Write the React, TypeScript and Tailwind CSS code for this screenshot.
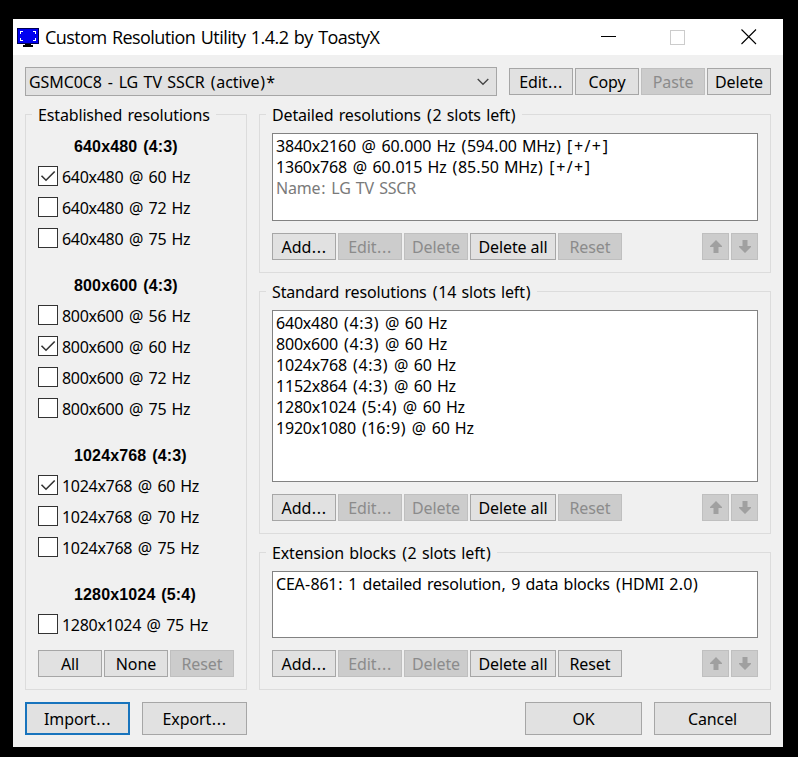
import type { ReactNode } from 'react'
import clsx from 'clsx'

const established = [
  {
    title: '640x480 (4:3)',
    modes: [
      { label: '640x480 @ 60 Hz', checked: true },
      { label: '640x480 @ 72 Hz', checked: false },
      { label: '640x480 @ 75 Hz', checked: false },
    ],
  },
  {
    title: '800x600 (4:3)',
    modes: [
      { label: '800x600 @ 56 Hz', checked: false },
      { label: '800x600 @ 60 Hz', checked: true },
      { label: '800x600 @ 72 Hz', checked: false },
      { label: '800x600 @ 75 Hz', checked: false },
    ],
  },
  {
    title: '1024x768 (4:3)',
    modes: [
      { label: '1024x768 @ 60 Hz', checked: true },
      { label: '1024x768 @ 70 Hz', checked: false },
      { label: '1024x768 @ 75 Hz', checked: false },
    ],
  },
  {
    title: '1280x1024 (5:4)',
    modes: [{ label: '1280x1024 @ 75 Hz', checked: false }],
  },
]

const standard = [
  '640x480 (4:3) @ 60 Hz',
  '800x600 (4:3) @ 60 Hz',
  '1024x768 (4:3) @ 60 Hz',
  '1152x864 (4:3) @ 60 Hz',
  '1280x1024 (5:4) @ 60 Hz',
  '1920x1080 (16:9) @ 60 Hz',
]

// Gives punctuation a little more room than the font does
function Label({ text }: { text: string }) {
  return (
    <>
      {text.split(/([():+[\].,@*-])/).map((part, i) => {
        if (i % 2 === 0) return part
        const wide = '():'.includes(part)
        return (
          <span
            key={i}
            className={part === '+' ? 'px-[1.5px]' : wide ? 'px-[0.8px]' : 'px-[0.45px]'}
          >
            {part}
          </span>
        )
      })}
    </>
  )
}

type ButtonProps = {
  text?: string
  children?: ReactNode
  className?: string
  disabled?: boolean
  focused?: boolean
}

function Button({ text, children, className = 'w-16 h-[27px]', disabled, focused }: ButtonProps) {
  return (
    <button
      disabled={disabled}
      className={clsx(
        'flex shrink-0 items-center justify-center tracking-[-0.1px] whitespace-nowrap',
        className,
        focused ? 'border-2 border-[#1874bd]' : 'border',
        disabled
          ? 'border-[#bfbfbf] bg-[#cccccc] text-[#8b8b8b]'
          : 'bg-[#e1e1e1] text-black',
        !disabled && !focused && 'border-[#a6a6a6]'
      )}
    >
      {text ? <span><Label text={text} /></span> : children}
    </button>
  )
}

function Group({ title, className, children }: { title: string; className: string; children: ReactNode }) {
  return (
    <section className={clsx('flex flex-col border border-[#dcdcdc] px-3', className)}>
      <h2 className="-ml-1.5 -mt-[10px] h-5 w-fit shrink-0 bg-[#f0f0f0] px-1.5 leading-[21px] tracking-[-0.15px] whitespace-nowrap">
        <Label text={title} />
      </h2>
      {children}
    </section>
  )
}

function Arrow({ down }: { down?: boolean }) {
  return (
    <svg width="12" height="13" viewBox="0 0 12 13" className={down ? 'rotate-180' : ''}>
      <path d="M6 0L12 6V7H8.5V13H3.5V7H0V6Z" fill="#a0a0a0" />
    </svg>
  )
}

function ListActions({ canReset }: { canReset?: boolean }) {
  return (
    <div className="mt-3 flex gap-0.5">
      <Button text="Add..." />
      <Button disabled text="Edit..." />
      <Button disabled text="Delete" />
      <Button className="h-[27px] w-[86px]" text="Delete all" />
      <Button disabled={!canReset} text="Reset" />
      <div className="ml-auto flex gap-0.5">
        <Button disabled className="h-[27px] w-[27px]">
          <Arrow />
        </Button>
        <Button disabled className="h-[27px] w-[27px]">
          <Arrow down />
        </Button>
      </div>
    </div>
  )
}

function List({ className, children }: { className: string; children: ReactNode }) {
  return (
    <ul className={clsx('border border-[#828282] bg-white px-[3px] pt-0.5 leading-[21px] tracking-[-0.2px] whitespace-nowrap', className)}>
      {children}
    </ul>
  )
}

function Checkbox({ label, checked }: { label: string; checked: boolean }) {
  return (
    <label className="flex h-[31px] items-start gap-1 pt-[5px]">
      <span className="flex h-5 w-5 shrink-0 items-center justify-center border border-[#333] bg-white">
        {checked && (
          <svg width="18" height="18" viewBox="0 0 18 18" fill="none" stroke="#333" strokeWidth="1.6">
            <path d="M2.5 8.7L7 13.2L15.7 4.5" />
          </svg>
        )}
      </span>
      <span className="leading-[22px] whitespace-nowrap">
        <Label text={label} />
      </span>
    </label>
  )
}

function TitleBar() {
  return (
    <header className="flex h-9 items-center bg-white pl-1">
      <svg width="22" height="19" viewBox="0 0 22 19" shapeRendering="crispEdges">
        <rect width="22" height="16" fill="#000050" />
        <rect x="1" y="1" width="20" height="14" fill="#0000f0" />
        <path d="M3.5 6V3.5H6M16 3.5H18.5V6M18.5 10V12.5H16M6 12.5H3.5V10" fill="none" stroke="#fff" />
        <path d="M8 16H14V17H16V19H6V17H8Z" fill="#000" />
      </svg>
      <h1 className="ml-1.5 font-['Open_Sans','Noto_Sans',sans-serif] text-[18px] leading-9 tracking-[-0.56px] whitespace-nowrap">
        Custom Resolution Utility 1.4.2 by ToastyX
      </h1>
      <svg className="mr-[26px] ml-auto" width="156" height="16" viewBox="0 0 156 16" fill="none">
        <path d="M0 7.5H15" stroke="#000" />
        <rect x="69.5" y="1.5" width="14" height="14" stroke="#ccc" />
        <path d="M140.5 0.5L155 15M155 0.5L140.5 15" stroke="#000" strokeWidth="1.1" />
      </svg>
    </header>
  )
}

export default function App() {
  return (
    <div className="h-[757px] w-[798px] bg-black pt-[19px] pl-[13px] font-['Noto_Sans',sans-serif] text-[16px] tracking-[-0.3px] text-black [word-spacing:1.3px]">
      <div className="h-[728px] w-[770px] bg-[#f0f0f0]">
        <TitleBar />
        <main className="px-3 pt-3">
          {/* Display selector */}
          <div className="flex h-[29px] items-center gap-0.5">
            <div className="mr-2.5 flex h-[29px] w-[472px] items-center justify-between border border-[#a6a6a6] bg-[#e1e1e1] pr-[7px] pl-[3px]">
              <span className="tracking-[-0.08px]">
                <Label text="GSMC0C8 - LG TV SSCR (active)*" />
              </span>
              <svg width="12" height="8" viewBox="0 0 12 8" fill="none" stroke="#444" strokeWidth="1.3">
                <path d="M0.7 1L6 6.3L11.3 1" />
              </svg>
            </div>
            <Button text="Edit..." />
            <Button text="Copy" />
            <Button disabled text="Paste" />
            <Button text="Delete" />
          </div>

          <div className="mt-[18px] flex gap-3">
            <Group title="Established resolutions" className="h-[576px] w-[222px]">
              <div className="mt-[5px] flex flex-col gap-[15px]">
                {established.map((group) => (
                  <div key={group.title}>
                    <h3 className="h-[31px] pl-9 font-['Liberation_Sans',Arial,sans-serif] font-bold leading-[34px] tracking-[0.15px]">
                      {group.title}
                    </h3>
                    {group.modes.map((mode) => (
                      <Checkbox key={mode.label} {...mode} />
                    ))}
                  </div>
                ))}
              </div>
              <div className="mt-2.5 flex gap-0.5">
                <Button text="All" />
                <Button text="None" />
                <Button disabled text="Reset" />
              </div>
            </Group>

            <div className="flex w-[512px] flex-col">
              <Group title="Detailed resolutions (2 slots left)" className="h-[159px]">
                <List className="mt-2 h-[88px]">
                  <li><Label text="3840x2160 @ 60.000 Hz (594.00 MHz) [+/+]" /></li>
                  <li><Label text="1360x768 @ 60.015 Hz (85.50 MHz) [+/+]" /></li>
                  <li className="text-[#7a7a7a]"><Label text="Name: LG TV SSCR" /></li>
                </List>
                <ListActions />
              </Group>
              <Group title="Standard resolutions (14 slots left)" className="mt-[18px] h-[243px]">
                <List className="mt-2 h-[172px]">
                  {standard.map((mode) => (
                    <li key={mode}><Label text={mode} /></li>
                  ))}
                </List>
                <ListActions />
              </Group>
              <Group title="Extension blocks (2 slots left)" className="mt-[18px] h-[138px]">
                <List className="mt-2 h-[67px]">
                  <li><Label text="CEA-861: 1 detailed resolution, 9 data blocks (HDMI 2.0)" /></li>
                </List>
                <ListActions canReset />
              </Group>
            </div>
          </div>

          {/* Dialog buttons */}
          <div className="mt-3 flex gap-3">
            <Button focused className="h-[33px] w-[105px]" text="Import..." />
            <Button className="h-[33px] w-[105px]" text="Export..." />
            <Button className="ml-auto h-[33px] w-[117px]" text="OK" />
            <Button className="h-[33px] w-[117px]" text="Cancel" />
          </div>
        </main>
      </div>
    </div>
  )
}
